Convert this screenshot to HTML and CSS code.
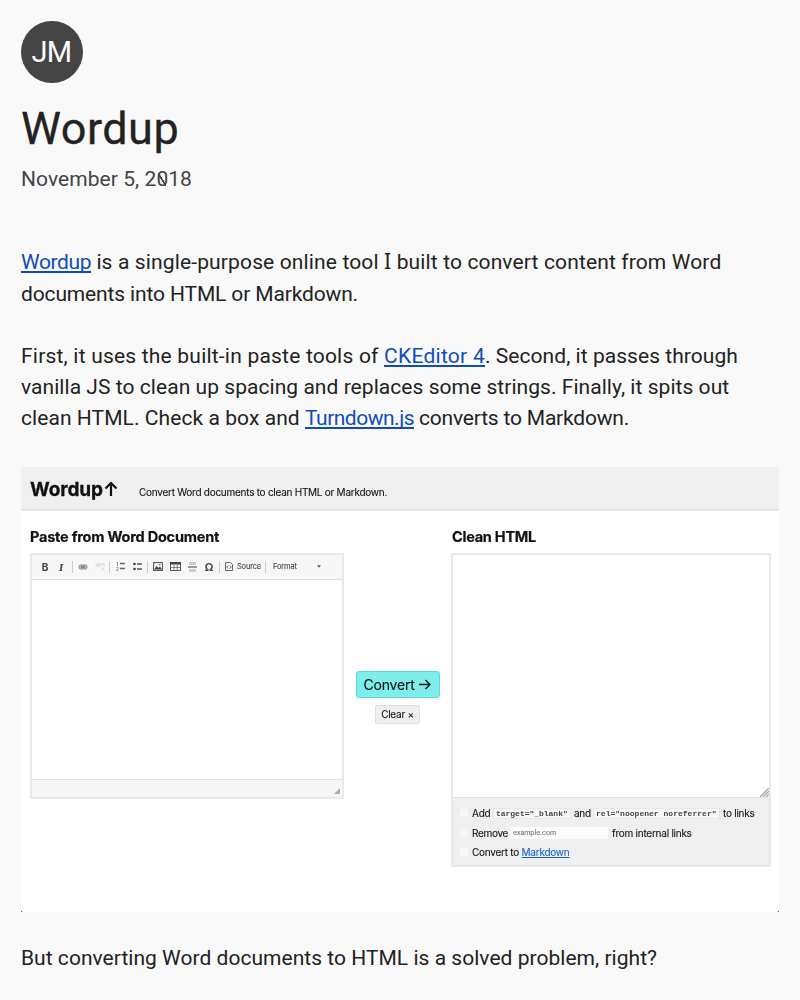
FILE: index.html
```html
<!DOCTYPE html>
<html lang="en">
<head>
<meta charset="utf-8">
<title>Wordup</title>
<link rel="stylesheet" href="styles.css">
</head>
<body>
<header class="site"><a class="avatar">JM</a></header>
<main>
<h1>Wordup</h1>
<div class="date">November 5, 2<span class="zero">0</span>18</div>
<p><a class="l1">Wordup</a><span class="l2"> is a single-purpose online tool <span class="serif-i">I</span> built to convert content from Word</span><br><span class="l3">documents into HTML or Markdown.</span></p>
<p><span class="l4">First, it uses the built-in paste tools of </span><a class="l5">CKEditor 4</a><span class="l6">. Second, it passes through</span><br><span class="l6">vanilla JS to clean up spacing and replaces some strings. Finally, it spits out</span><br><span class="l7">clean HTML. Check a box and </span><a class="l8">Turndown.js</a><span class="l9"> converts to Markdown.</span></p>
<figure class="shot">
<div class="app">
<div class="app-head"><span class="logo">Wordup</span><svg class="up" width="14" height="16" viewBox="0 0 14 16"><path d="M7 15V2M1.500 7.500 7 2l5.500 5.500" fill="none" stroke="#111" stroke-width="2.200"/></svg><span class="tag">Convert Word documents to clean HTML or Markdown.</span></div>
<div class="app-body">
<section class="left">
<h2>Paste from Word Document</h2>
<div class="editor">
<div class="tools">
<b class="tb">B</b><i class="ti">I</i><span class="sep"></span>
<svg width="10" height="6" viewBox="0 0 10 6"><rect x="1" y="1" width="8" height="4" rx="1.500" fill="#bbb" stroke="#888"/><path d="M3 3h4" stroke="#666" stroke-width="1.200"/></svg>
<svg width="10" height="9" viewBox="0 0 10 9"><path d="M1 2h4v2H1zM6 2h3v2M6 5.500l3 3M9 5.500l-3 3" fill="none" stroke="#d2d2d2"/></svg>
<span class="sep"></span>
<svg width="9" height="9" viewBox="0 0 9 9"><path d="M4 1.500h5M4 6.500h5" stroke="#666" stroke-width="1.300"/><path d="M.5.500h1V4M.5 5.500h1.500v1L.5 8.500H2" fill="none" stroke="#777" stroke-width=".8"/></svg>
<svg width="9" height="9" viewBox="0 0 9 9"><path d="M4 2h5M4 7h5" stroke="#555" stroke-width="1.300"/><circle cx="1.500" cy="2" r="1.300" fill="#444"/><circle cx="1.500" cy="7" r="1.300" fill="#444"/></svg>
<span class="sep"></span>
<svg width="10" height="9" viewBox="0 0 10 9"><rect x=".6" y=".6" width="8.800" height="7.800" fill="#fff" stroke="#555" stroke-width="1.100"/><path d="M1 7.500 3.500 4l2 2L7 4.500l2 3z" fill="#444"/><circle cx="6.800" cy="2.800" r=".8" fill="#555"/></svg>
<svg width="11" height="9" viewBox="0 0 11 9"><rect x=".5" y=".5" width="10" height="8" fill="#fff" stroke="#555"/><path d="M0 0h11v2.500H0z" fill="#444"/><path d="M4 1v8M7.200 1v8M0 5.500h11" stroke="#666" stroke-width=".8"/></svg>
<svg width="9" height="10" viewBox="0 0 9 10"><path d="M1 0h7v3H1zM1 7h7v3H1z" fill="#ccc"/><path d="M0 5h9" stroke="#666" stroke-width="1.300"/></svg>
<span class="omega">Ω</span><span class="sep"></span>
<svg width="8" height="9" viewBox="0 0 8 9"><path d="M.5.500h5l2 2v6h-7zM3 3.500 1.800 5 3 6.500M5 3.500 6.200 5 5 6.500" fill="none" stroke="#555" stroke-width=".9"/></svg>
<span class="src">Source</span><span class="sep"></span><span class="fmt">Format</span>
<svg width="4" height="3" viewBox="0 0 5 3"><path d="M0 0h5L2.500 3z" fill="#555"/></svg>
</div>
<div class="paper"></div>
<div class="foot"><svg width="6" height="6" viewBox="0 0 6 6"><path d="M6 0v6H0z" fill="#aaa"/></svg></div>
</div>
</section>
<section class="mid"><div class="convert"><span>Convert</span><svg width="12" height="11" viewBox="0 0 12 11"><path d="M0 5.500h10.500M6.500 1 11 5.500 6.500 10" fill="none" stroke="#111" stroke-width="1.300"/></svg></div><div class="clear">Clear ×</div></section>
<section class="right">
<h2 class="h-clean">Clean HTML</h2>
<div class="out">
<div class="area"><svg width="9" height="9" viewBox="0 0 9 9"><path d="M0 9 9 0M3 9l6-6M6 9l3-3" stroke="#aaa" stroke-width="1.300"/></svg></div>
<div class="opts">
<div class="row"><span class="box"></span><span class="add">Add</span><code class="c1">target="_blank"</code><span class="and">and</span><code class="c2">rel="noopener noreferrer"</code><span class="to">to links</span></div>
<div class="row"><span class="box"></span><span class="rem">Remove</span><span class="input">example.com</span><span class="int">from internal links</span></div>
<div class="row"><span class="box"></span><span class="conv">Convert to&nbsp;</span><a class="md">Markdown</a></div>
</div>
</div>
</section>
</div>
</div>
</figure>
<p class="last">But converting Word documents to HTML is a solved problem, right?</p>
</main>
</body>
</html>
```
FILE: styles.css
```css
* { box-sizing: border-box; }
html, body { height: 1000px; overflow: hidden; }
body { margin: 0; padding: 21px 21px 0; background: #f9f9f9; color: #222; font: 21px/31.2px Roboto, sans-serif; }
.avatar { display: flex; align-items: center; justify-content: center; width: 62px; height: 62px; padding: 2px 1px 0 0; border-radius: 50%; background: #444; color: #fff; font-size: 29px; letter-spacing: -.6px; }
h1 { margin: 19px 0 0; font-size: 45px; line-height: 54px; font-weight: 400; letter-spacing: .5px; -webkit-text-stroke: .3px #222; }
.date { margin-top: 8px; color: #444; letter-spacing: .06px; }
.zero { background: linear-gradient(to top right, transparent 42%, #444 45%, #444 55%, transparent 58%) 2px center / 8px 13px no-repeat; }
p { margin: 0 0 31px; white-space: nowrap; }
.date + p { margin: 52px 0 30px; line-height: 31.7px; }
p a { color: #0f4cba; text-decoration: underline; text-decoration-thickness: 2px; text-underline-offset: 2px; text-decoration-skip-ink: none; }
.l1 { letter-spacing: -.4px; }
.l2 { letter-spacing: .137px; }
.serif-i { font-family: "Noto Sans", sans-serif; line-height: 1; }
.l3 { letter-spacing: -.138px; }
.l4 { letter-spacing: .206px; }
.l5 { letter-spacing: .27px; }
.l6 { letter-spacing: .048px; }
.l7 { letter-spacing: .065px; }
.l8 { letter-spacing: -.495px; }
.l9 { letter-spacing: -.2px; }
.last { letter-spacing: .029px; }

.shot { margin: 33px 0 31px; height: 445px; background: #222; }
.app { height: 445px; background: #fff; border-radius: 0 0 2px 2px; color: #111; font: 10px/12px Inter, sans-serif; letter-spacing: -.25px; -webkit-text-stroke: .1px; }
.app-head { display: flex; height: 44px; padding-left: 9px; background: #efefef; border-bottom: 2px solid #e5e5e5; }
.logo { width: 74px; padding-top: 11px; font-weight: 700; font-size: 19px; line-height: 24px; letter-spacing: -.08px; -webkit-text-stroke: .3px; filter: blur(.25px); }
.up { margin-top: 14px; }
.tag { margin: 19px 0 0 21px; letter-spacing: -.261px; filter: blur(.25px); }
.app-body { display: grid; grid-template-columns: 314px 107px 320px; padding: 16px 0 0 9px; }
h2 { margin: 0 0 6px; font-size: 14.5px; line-height: 20px; font-weight: 700; letter-spacing: -.22px; white-space: nowrap; -webkit-text-stroke: .2px; filter: blur(.25px); }
.h-clean { padding-left: 1px; letter-spacing: -.25px; }
.editor { display: flex; flex-direction: column; height: 246px; border: 2px solid #e9e9e9; }
.tools { display: grid; grid-template-columns: 16px 16px 6px 15px 19px 1px 20px 15px 5px 15px 20px 14px 20px 1px 17px 28px 1px 48px 9px; align-items: center; justify-items: center; height: 25px; padding: 0 0 1px 5px; background: #f7f7f7; border-bottom: 1px solid #ddd; color: #444; font-size: 7.5px; filter: blur(.25px); }
.tb { font-size: 10px; }
.ti { font: italic bold 11px/12px "Liberation Serif", serif; }
.sep { width: 1px; height: 12px; background: #ccc; }
.omega { font-size: 11px; font-weight: 600; }
.src { justify-self: start; letter-spacing: -.2px; }
.fmt { justify-self: start; padding-left: 7px; letter-spacing: -.15px; }
.paper { flex: 1; }
.foot { display: flex; justify-content: flex-end; align-items: flex-end; height: 18px; padding: 0 2px 3px; background: #f7f7f7; border-top: 1px solid #e1e1e1; }
.mid { display: flex; flex-direction: column; align-items: center; padding-top: 144px; }
.convert { display: flex; align-items: center; gap: 4px; width: 84px; height: 27px; padding-left: 7px; border: 1px solid #60d9d6; border-radius: 3px; background: #7deeeb; font-size: 14px; line-height: 20px; letter-spacing: -.2px; }
.clear { width: 45px; height: 19px; margin-top: 7px; border: 1px solid #e0e0e0; border-radius: 2px; background: #efefef; text-align: center; line-height: 17px; }
.convert span, .clear { filter: blur(.2px); }
.out { height: 314px; border: 2px solid #e9e9e9; background: #efefef; }
.area { display: flex; justify-content: flex-end; align-items: flex-end; height: 243px; background: #fff; border-bottom: 1px solid #e2e2e2; }
.opts { padding: 5.500px 0 0 7px; filter: blur(.2px); white-space: nowrap; }
.row { display: flex; align-items: center; height: 19.5px; }
.box { width: 8px; height: 8px; margin-right: 4px; border-radius: 2px; background: #f7f7f7; }
.add { width: 21px; }
code { height: 11px; background: #f7f7f7; border: 1px solid #e7e7e7; font: bold 8px/10px "Liberation Mono", monospace; color: #444; -webkit-text-stroke: 0; }
.c1 { width: 78px; padding: 0 2px; letter-spacing: -.02px; }
.and { margin-left: 3px; width: 19px; }
.c2 { width: 127px; padding: 0 2px; letter-spacing: .02px; }
.to { margin-left: 3px; }
.rem { width: 38px; letter-spacing: -.32px; }
.input { width: 98px; height: 12px; margin-right: 4px; padding-left: 3px; background: #fbfbfb; color: #777; font-size: 7px; letter-spacing: -.11px; }
.md { color: #1760ce; text-decoration: underline; letter-spacing: -.25px; }
```
